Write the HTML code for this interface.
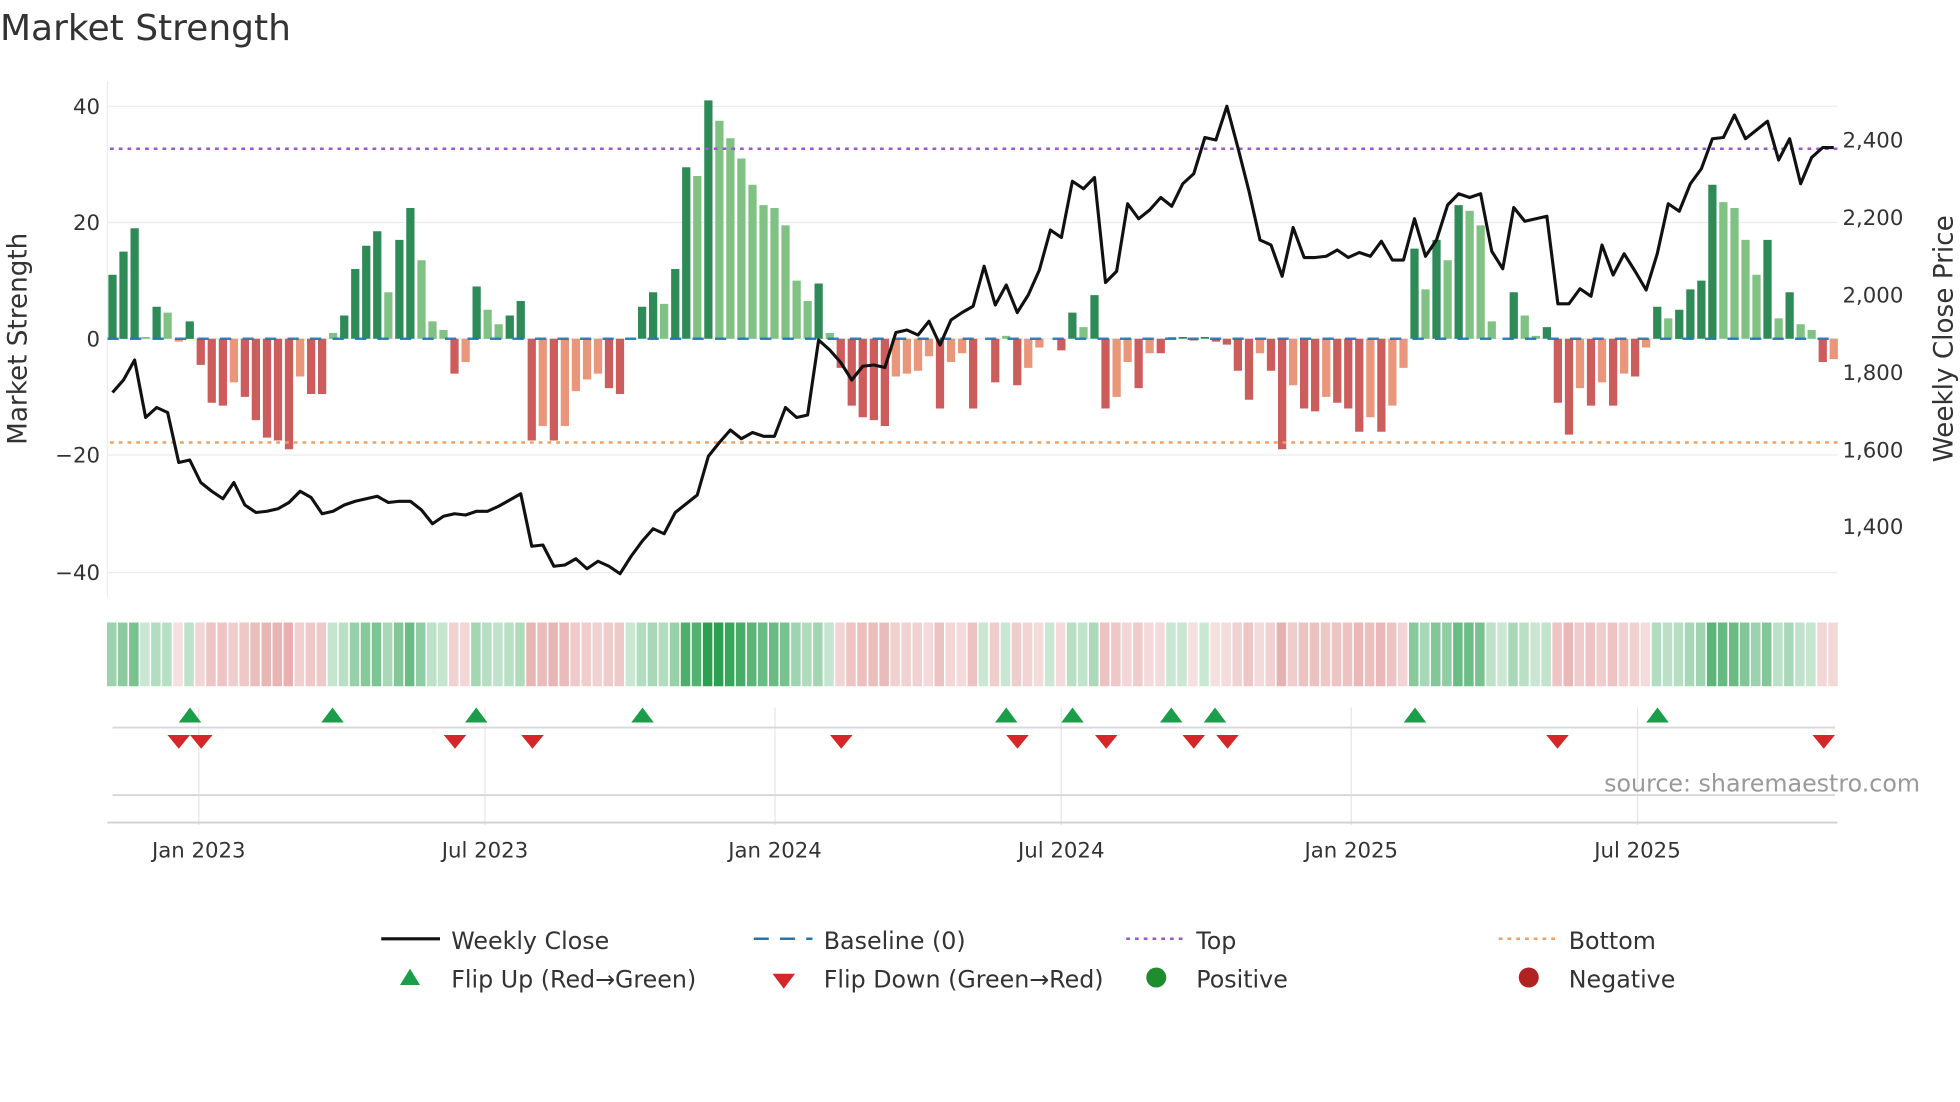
<!DOCTYPE html>
<html><head><meta charset="utf-8"><style>
html,body{margin:0;padding:0;background:#fff;width:1960px;height:1102px;overflow:hidden}
svg text{font-family:"DejaVu Sans","Liberation Sans",sans-serif}
</style></head><body>
<svg id="s" width="1960" height="1102" viewBox="0 0 1568 881.6" xmlns="http://www.w3.org/2000/svg">
<rect width="1568" height="882" fill="#fff"/>
<text x="0" y="32" font-size="28.8" fill="#333">Market Strength</text>
<g stroke="#ececec" stroke-width="1">
<line x1="86" y1="85" x2="1470" y2="85"/><line x1="86" y1="178" x2="1470" y2="178"/>
<line x1="86" y1="271" x2="1470" y2="271"/><line x1="86" y1="364" x2="1470" y2="364"/>
<line x1="86" y1="458" x2="1470" y2="458"/>
<line x1="86" y1="65" x2="86" y2="478"/>
</g>
<g font-size="17" fill="#333" text-anchor="end">
<text x="80" y="91">40</text><text x="80" y="184">20</text><text x="80" y="277">0</text>
<text x="80" y="370">−20</text><text x="80" y="464">−40</text>
</g>
<g font-size="17" fill="#333">
<text x="1474" y="118">2,400</text><text x="1474" y="180">2,200</text><text x="1474" y="242">2,000</text>
<text x="1474" y="304">1,800</text><text x="1474" y="366">1,600</text><text x="1474" y="427">1,400</text>
</g>
<text transform="translate(21,271) rotate(-90)" font-size="21" fill="#333" text-anchor="middle">Market Strength</text>
<text transform="translate(1562,271) rotate(-90)" font-size="21" fill="#333" text-anchor="middle">Weekly Close Price</text>
<g id="bars"></g>
<line x1="86" y1="271" x2="1470" y2="271" stroke="#1f77b4" stroke-width="2" stroke-dasharray="9,9" opacity="0.9"/>
<line x1="88" y1="119" x2="1470" y2="119" stroke="#9b59d0" stroke-width="2" stroke-dasharray="3,4"/>
<line x1="88" y1="354" x2="1470" y2="354" stroke="#f0a060" stroke-width="2" stroke-dasharray="3,4"/>
<polyline id="pl" fill="none" stroke="#111" stroke-width="2.5" stroke-linejoin="round"/>
<g id="heat"></g>
<g stroke="#e6e6e6" stroke-width="1">
<line x1="159" y1="566" x2="159" y2="660"/><line x1="388" y1="566" x2="388" y2="660"/>
<line x1="620" y1="566" x2="620" y2="660"/><line x1="849" y1="566" x2="849" y2="660"/>
<line x1="1081" y1="566" x2="1081" y2="660"/><line x1="1310" y1="566" x2="1310" y2="660"/>
</g>
<line x1="90" y1="582" x2="1468" y2="582" stroke="#d8d8d8" stroke-width="1.5"/>
<line x1="90" y1="636" x2="1468" y2="636" stroke="#d8d8d8" stroke-width="1.5"/>
<line x1="86" y1="658" x2="1470" y2="658" stroke="#d0d0d0" stroke-width="1.5"/>
<g id="mk"></g>
<text x="1536" y="633" font-size="19" fill="#999" text-anchor="end">source: sharemaestro.com</text>
<g font-size="17" fill="#333" text-anchor="middle">
<text x="159" y="686">Jan 2023</text><text x="388" y="686">Jul 2023</text><text x="620" y="686">Jan 2024</text>
<text x="849" y="686">Jul 2024</text><text x="1081" y="686">Jan 2025</text><text x="1310" y="686">Jul 2025</text>
</g>
<g font-size="19" fill="#333">
<line x1="305" y1="751" x2="352" y2="751" stroke="#111" stroke-width="2.5"/><text x="361" y="759">Weekly Close</text>
<line x1="603" y1="751" x2="650" y2="751" stroke="#1f77b4" stroke-width="2" stroke-dasharray="12,9"/><text x="659" y="759">Baseline (0)</text>
<line x1="901" y1="751" x2="948" y2="751" stroke="#9b59d0" stroke-width="2" stroke-dasharray="3,4"/><text x="957" y="759">Top</text>
<line x1="1199" y1="751" x2="1246" y2="751" stroke="#f0a060" stroke-width="2" stroke-dasharray="3,4"/><text x="1255" y="759">Bottom</text>
<polygon points="320,788 336,788 328,775" fill="#1a9e4a"/><text x="361" y="790">Flip Up (Red→Green)</text>
<polygon points="618,779 636,779 627,791" fill="#d62728"/><text x="659" y="790">Flip Down (Green→Red)</text>
<circle cx="925" cy="782" r="8" fill="#1f8c2e"/><text x="957" y="790">Positive</text>
<circle cx="1223" cy="782" r="8" fill="#b22222"/><text x="1255" y="790">Negative</text>
</g>
</svg>
<script>
var v=[11,15,19,0.3,5.5,4.5,-0.5,3,-4.5,-11,-11.5,-7.5,-10,-14,-17,-17.5,-19,-6.5,-9.5,-9.5,1,4,12,16,18.5,8,17,22.5,13.5,3,1.5,-6,-4,9,5,2.5,4,6.5,-17.5,-15,-17.5,-15,-9,-7,-6,-8.5,-9.5,0,5.5,8,6,12,29.5,28,41,37.5,34.5,31,26.5,23,22.5,19.5,10,6.5,9.5,1,-5,-11.5,-13.5,-14,-15,-6.5,-6,-5.5,-3,-12,-4,-2.5,-12,0,-7.5,0.5,-8,-5,-1.5,0,-2,4.5,2,7.5,-12,-10,-4,-8.5,-2.5,-2.5,0.3,0.3,-0.3,0.3,-0.5,-1,-5.5,-10.5,-2.5,-5.5,-19,-8,-12,-12.5,-10,-11,-12,-16,-13.5,-16,-11.5,-5,15.5,8.5,17,13.5,23,22,19.5,3,0,8,4,0.5,2,-11,-16.5,-8.5,-11.5,-7.5,-11.5,-6,-6.5,-1.5,5.5,3.5,5,8.5,10,26.5,23.5,22.5,17,11,17,3.5,8,2.5,1.5,-4,-3.5];
var step=(1467-90)/(v.length-1),b='',h='';
for(var i=0;i<v.length;i++){var x=90+i*step,y=v[i],p=i?v[i-1]:0,dark=Math.abs(y)>=Math.abs(p);
var c=y>=0?(dark?'#2e8b57':'#80c283'):(dark?'#cd5c5c':'#e9967a');var hh=Math.abs(y)*4.65;
b+='<rect x="'+(x-3.3).toFixed(1)+'" y="'+(y>=0?271-hh:271).toFixed(1)+'" width="6.6" height="'+hh.toFixed(1)+'" fill="'+c+'"/>';
var a=Math.min(1,Math.abs(y)/40)*0.8+0.25;var hc=y>=0?'rgba(44,160,80,'+a+')':'rgba(205,90,90,'+(a*0.75)+')';
h+='<rect x="'+(x-4.4).toFixed(1)+'" y="498" width="'+(step-1.2).toFixed(1)+'" height="51" fill="'+hc+'"/>';}
document.getElementById('bars').innerHTML=b;document.getElementById('heat').innerHTML=h;
var L=[314,304,288,334,326,330,370,368,386,393,399,386,404,410,409,407,402,393,398,411,409,404,401,399,397,402,401,401,408,419,413,411,412,409,409,405,400,395,437,436,453,452,447,455,449,453,459,445,433,423,427,410,403,396,365,354,344,351,346,349,349,326,334,332,272,280,290,304,293,292,294,266,264,268,257,276,256,250,245,213,244,228,250,236,216,184,190,145,151,142,226,217,163,175,168,158,165,147,139,110,112,85,118,153,192,196,221,182,206,206,205,200,206,202,205,193,208,208,175,205,192,164,155,158,155,201,215,166,177,175,173,243,243,231,237,196,220,203,217,232,203,163,169,147,135,111,110,92,111,104,97,128,111,147,126,118,118];
var ls=(1467-90)/(L.length-1),pts=[];for(var j=0;j<L.length;j++)pts.push((90+j*ls).toFixed(1)+','+L[j]);
document.getElementById('pl').setAttribute('points',pts.join(' '));
var up=[152,266,381,514,805,858,937,972,1132,1326],dn=[143,161,364,426,673,814,885,955,982,1246,1459],m='';
up.forEach(function(x){m+='<polygon points="'+(x-9)+',578 '+(x+9)+',578 '+x+',566" fill="#1a9e4a"/>';});
dn.forEach(function(x){m+='<polygon points="'+(x-9)+',588 '+(x+9)+',588 '+x+',599" fill="#d62728"/>';});
document.getElementById('mk').innerHTML=m;
</script>
</body></html>
